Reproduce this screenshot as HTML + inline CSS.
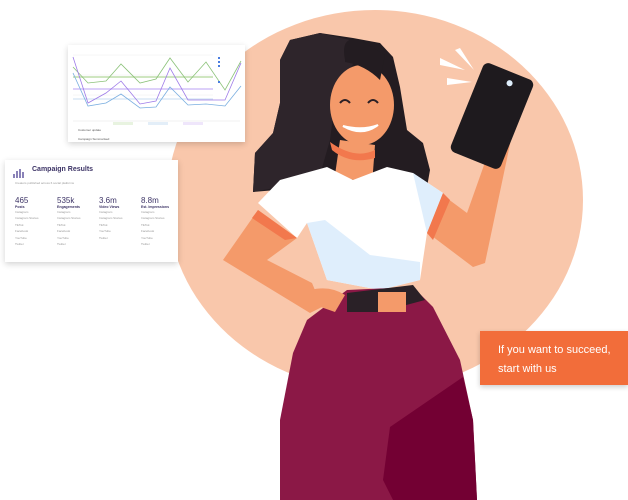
<!DOCTYPE html>
<html><head><meta charset="utf-8"><style>
body{margin:0;width:628px;height:500px;overflow:hidden;background:#fff;font-family:"Liberation Sans",sans-serif;position:relative}
.card{position:absolute;background:#fff;box-shadow:0 2px 6px rgba(0,0,0,.18)}
.t{position:absolute;font-size:3px;color:#999}
</style></head><body>
<svg width="628" height="500" style="position:absolute;left:0;top:0">
<ellipse cx="375" cy="200" rx="208" ry="190" fill="#f9c7ab"/>
</svg>
<div class="card" style="left:68px;top:45px;width:177px;height:97px">
<svg width="177" height="97">
<g stroke="#eee" stroke-width=".5"><line x1="5" y1="10" x2="145" y2="10"/><line x1="5" y1="50" x2="145" y2="50"/><line x1="5" y1="30" x2="145" y2="30"/></g>
<line x1="5" y1="32" x2="145" y2="32" stroke="#cfe6c0" stroke-width="2"/>
<line x1="5" y1="44" x2="145" y2="44" stroke="#ddd0fa" stroke-width="2"/>
<line x1="5" y1="54" x2="145" y2="54" stroke="#c8def0" stroke-width="1"/>
<polyline fill="none" stroke="#8cc27a" stroke-width=".8" points="5,22 20,38 38,36 53,19 72,38 88,34 102,13 120,37 138,17 157,45 173,16"/>
<polyline fill="none" stroke="#9e7be8" stroke-width=".8" points="5,12 20,58 38,48 53,36 72,59 88,56 102,23 120,55 138,55 157,55 173,18"/>
<polyline fill="none" stroke="#7aaee0" stroke-width=".8" points="5,28 20,61 38,58 53,49 72,63 88,62 102,42 120,60 138,59 157,61 173,41"/>
<g font-size="3" fill="#888"><rect x="150" y="12" width="2" height="2" fill="#4a7de0"/><rect x="150" y="16" width="2" height="2" fill="#4a7de0"/><rect x="150" y="20" width="2" height="2" fill="#4a7de0"/><rect x="150" y="36" width="2" height="2" fill="#4a7de0"/></g>
<line x1="5" y1="76" x2="172" y2="76" stroke="#ddd" stroke-width=".4"/>
<rect x="45" y="77" width="20" height="3" fill="#e8f3e0"/><rect x="80" y="77" width="20" height="3" fill="#e3eef8"/><rect x="115" y="77" width="20" height="3" fill="#efe6fb"/>
<text x="10" y="86" font-size="3" fill="#555">Customer update</text>
<text x="10" y="95" font-size="3" fill="#555">Campaign Summarised</text>
</svg></div>
<div class="card" style="left:5px;top:160px;width:173px;height:102px">
<svg style="position:absolute;left:8px;top:8px" width="14" height="10"><g fill="#8a82b8"><rect x="0" y="6" width="2" height="4"/><rect x="3" y="3" width="2" height="7"/><rect x="6" y="1" width="2" height="9"/><rect x="9" y="4" width="2" height="6"/></g></svg>
<div style="position:absolute;left:27px;top:6px;font-size:7px;font-weight:bold;color:#3d3466">Campaign Results</div>
<div class="t" style="left:10px;top:21px">Creators published across 6 social platforms</div>
<div style="position:absolute;left:10px;top:36px;display:flex;gap:0">
<div style="width:42px"><div style="font-size:8px;color:#3d3466">465</div><div style="font-size:3.5px;font-weight:bold;color:#3d3466">Posts</div><div class="t" style="position:static;line-height:6.4px">Instagram<br>Instagram Stories<br>TikTok<br>Facebook<br>YouTube<br>Twitter</div></div>
<div style="width:42px"><div style="font-size:8px;color:#3d3466">535k</div><div style="font-size:3.5px;font-weight:bold;color:#3d3466">Engagements</div><div class="t" style="position:static;line-height:6.4px">Instagram<br>Instagram Stories<br>TikTok<br>Facebook<br>YouTube<br>Twitter</div></div>
<div style="width:42px"><div style="font-size:8px;color:#3d3466">3.6m</div><div style="font-size:3.5px;font-weight:bold;color:#3d3466">Video Views</div><div class="t" style="position:static;line-height:6.4px">Instagram<br>Instagram Stories<br>TikTok<br>YouTube<br>Twitter</div></div>
<div style="width:42px"><div style="font-size:8px;color:#3d3466">8.8m</div><div style="font-size:3.5px;font-weight:bold;color:#3d3466">Est. Impressions</div><div class="t" style="position:static;line-height:6.4px">Instagram<br>Instagram Stories<br>TikTok<br>Facebook<br>YouTube<br>Twitter</div></div>
</div></div>
<svg width="628" height="500" style="position:absolute;left:0;top:0">
<path d="M280,60 L290,40 L320,33 L353,38 L380,43 L393,57 L400,87 L407,130 L423,143 L430,170 L427,187 L413,173 L353,180 L300,188 L253,192 L255,153 L273,133 L280,103 Z" fill="#231c21"/>
<path d="M280,60 L290,40 L320,33 L350,40 L355,60 L335,100 L330,140 L320,175 L290,185 L253,192 L255,153 L273,133 L280,103 Z" fill="#2e252b"/>
<path d="M420,227 L473,267 L485,263 L513,130 L500,120 L467,213 L440,193 Z" fill="#f49a6a"/>
<path d="M258,210 L223,260 L310,313 L322,307 L312,283 L267,260 L297,238 Z" fill="#f49a6a"/>
<path d="M340,140 L375,145 L372,185 L335,175 Z" fill="#f49a6a"/>
<ellipse cx="362" cy="105" rx="32" ry="40" fill="#f49a6a"/>
<path d="M330,142 Q355,160 375,150 L375,158 Q350,165 332,150Z" fill="#f2784d"/>
<path d="M345,60 Q340,35 360,40 L385,55 L380,80 Q365,65 345,62Z" fill="#231c21"/>
<path d="M343,126 Q362,137 378,125 Q362,131 343,126Z" fill="#fff" stroke="#fff" stroke-width="2"/>
<path d="M340,103 q5,-6 10,0 M368,103 q5,-6 10,0" stroke="#2a1f25" stroke-width="2" fill="none"/>
<path d="M258,203 L280,180 L327,167 L353,180 L387,167 L413,173 L443,193 L427,233 L420,280 L380,290 L327,280 L307,223 L297,238 Z" fill="#fff"/>
<path d="M307,223 L325,220 L370,255 L420,262 L420,280 L380,290 L327,280 Z" fill="#dfeefc"/>
<path d="M413,173 L443,193 L427,233 Z" fill="#dfeefc"/>
<path d="M258,210 L297,238 L285,240 L252,218Z" fill="#f2784d"/>
<path d="M443,193 L450,200 L433,240 L427,233Z" fill="#f2784d"/>
<path d="M307,320 L347,290 L413,287 L433,307 L460,360 L473,420 L477,500 L280,500 L280,420 L293,353 Z" fill="#8b1846"/>
<path d="M390,427 L463,377 L473,420 L477,500 L393,500 L383,480 Z" fill="#730033"/>
<path d="M347,293 L413,285 L425,300 L380,312 L347,312 Z" fill="#2a2127"/>
<rect x="378" y="292" width="28" height="20" fill="#f49a6a"/>
<path d="M310,290 Q330,285 345,295 L335,312 L315,305Z" fill="#f49a6a"/>
<g transform="translate(492,116) rotate(22)"><rect x="-27" y="-48" width="54" height="96" rx="6" fill="#1e1a1e"/><circle cx="4" cy="-37" r="3" fill="#dfeefc"/></g>
<path d="M440,65 L465,70 L440,58Z M447,85 L472,82 L447,78Z M455,50 L474,70 L460,48Z" fill="#fff"/>
</svg>
<div style="position:absolute;left:480px;top:331px;width:148px;height:54px;background:#f26d3a;box-shadow:0 2px 5px rgba(0,0,0,.2);color:#fff;font-size:11px;line-height:19px;padding:10px 0 0 18px;box-sizing:border-box">If you want to succeed,<br>start with us</div>
</body></html>
